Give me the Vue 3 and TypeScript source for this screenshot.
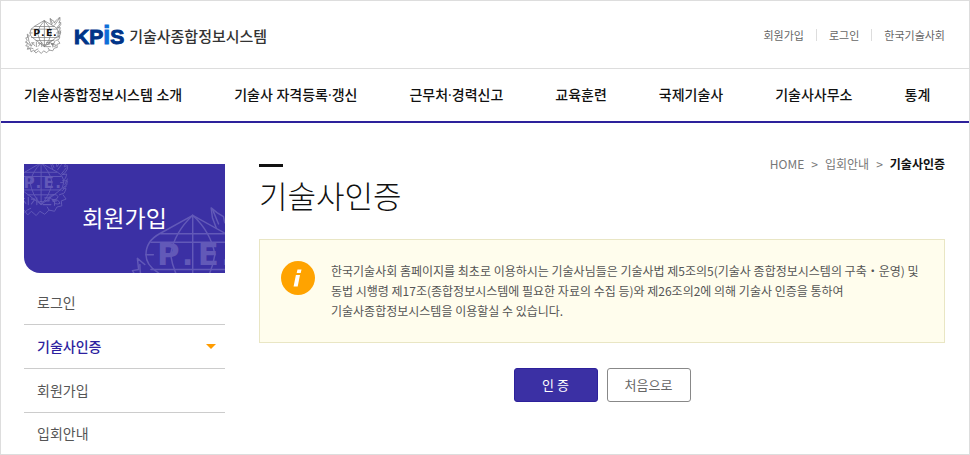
<script setup lang="ts">
interface LinkItem {
  label: string
  href: string
}

interface SideItem extends LinkItem {
  active?: boolean
}

const utilityLinks: LinkItem[] = [
  { label: '회원가입', href: '#join' },
  { label: '로그인', href: '#login' },
  { label: '한국기술사회', href: '#kpea' },
]

const mainMenu: LinkItem[] = [
  { label: '기술사종합정보시스템 소개', href: '#intro' },
  { label: '기술사 자격등록·갱신', href: '#license' },
  { label: '근무처·경력신고', href: '#career' },
  { label: '교육훈련', href: '#education' },
  { label: '국제기술사', href: '#international' },
  { label: '기술사사무소', href: '#office' },
  { label: '통계', href: '#statistics' },
]

const sideMenu: SideItem[] = [
  { label: '로그인', href: '#login' },
  { label: '기술사인증', href: '#verify', active: true },
  { label: '회원가입', href: '#join' },
  { label: '입회안내', href: '#guide' },
]
</script>

<template>
  <div class="page">
    <svg class="defs" width="0" height="0" aria-hidden="true">
      <symbol id="emblem" viewBox="0 0 100 100">
        <g fill="none" stroke="currentColor" stroke-linejoin="round" stroke-linecap="round">
          <path d="M51 10 L78 25 Q88 31 88 42 Q88 50 80 56 L51 78 L22 56 Q13 50 13 42 Q13 31 24 25 Z" />
          <path d="M51 10 V78 M51 10 Q36 24 33 42 Q36 62 51 78 M51 10 Q66 24 69 42 Q66 62 51 78" />
          <path d="M25 25 H77 M17 32 H84 M13 42 H19 M83 42 H88 M17 54 H84 M29 62 H73" />
          <path d="M70 20 l-3 -8 -1 -8 5 4 5 3 1 5 4 -6 6 -6 5 -3 0 8 -3 7 5 -2 0 6 -4 6 -5 3 8 -1 -2 7 -5 4 8 0 -1 7 -7 5 6 1 -3 7 -8 3" />
          <path d="M72 17 L67 5 M78 21 Q84 13 91 3 M84 28 Q89 22 92 18 M90 45 L94 36 M86 55 L92 48" />
          <path d="M12 50 l-6 -5 1 9 -5 1 4 7 -5 4 6 4 -5 6 7 1 -3 8 8 -2 2 9 7 -5 6 8 6 -6 8 7 6 -7 8 5 7 -7 9 2 4 -7 8 -2 -1 -8 8 -3 -5 -7" />
          <path d="M8 50 Q8 64 16 76 M4 66 Q10 70 14 76 M9 82 Q15 80 21 83 M24 91 Q28 86 34 84 M64 87 L61 82" />
          <path d="M64 66 q9 -9 15 -1 q-5 10 -15 1 M70 70 q9 -2 12 6 q-9 4 -12 -6" />
          <path stroke-width="1.8" d="M17 68 h7 M21 68 l-4 8 M22 71 l4 5 M30 66 v12 M35 69 h6 l-6 8 M44 67 v11 M49 73 h4 M57 67 h7 v5 h-7 M54 78 h13 M70 72 h6 M73 72 v7" />
        </g>
        <text class="emblem-text" x="22 42 55 74" y="50">P.E.</text>
      </symbol>
    </svg>

    <header class="header">
      <a class="logo" href="#home">
        <svg class="logo-emblem" aria-hidden="true"><use href="#emblem" /></svg>
        <span class="logo-mark">KP<span class="logo-i">i</span>S</span>
        <span class="logo-name">기술사종합정보시스템</span>
      </a>
      <ul class="utility">
        <li v-for="link in utilityLinks" :key="link.label">
          <a :href="link.href">{{ link.label }}</a>
        </li>
      </ul>
    </header>

    <nav class="main-nav">
      <a v-for="item in mainMenu" :key="item.label" :href="item.href">{{ item.label }}</a>
    </nav>

    <div class="body">
      <aside class="side">
        <div class="side-head">
          <svg class="mark-small" aria-hidden="true"><use href="#emblem" /></svg>
          <svg class="mark-large" aria-hidden="true"><use href="#emblem" /></svg>
          <h2>회원가입</h2>
        </div>
        <ul class="side-menu">
          <li v-for="item in sideMenu" :key="item.label">
            <a :href="item.href" :class="{ active: item.active }">{{ item.label }}</a>
          </li>
        </ul>
      </aside>

      <main class="content">
        <div class="title-row">
          <h1>기술사인증</h1>
          <nav class="breadcrumb">
            <a href="#home">HOME</a>
            <span>&gt;</span>
            <a href="#guide">입회안내</a>
            <span>&gt;</span>
            <strong>기술사인증</strong>
          </nav>
        </div>

        <section class="notice">
          <svg class="info-icon" viewBox="0 0 34 34" aria-hidden="true">
            <circle cx="17" cy="17" r="17" fill="#ffa300" />
            <path d="M16.5 8.5h4l-.8 3.6h-4z M14.9 14h4.1l-2.3 11.5h-4.1z" fill="#fff" />
          </svg>
          <p>
            한국기술사회 홈페이지를 최초로 이용하시는 기술사님들은 기술사법 제5조의5(기술사 종합정보시스템의 구축・운영) 및
            동법 시행령 제17조(종합정보시스템에 필요한 자료의 수집 등)와 제26조의2에 의해 기술사 인증을 통하여<br />
            기술사종합정보시스템을 이용할실 수 있습니다.
          </p>
        </section>

        <div class="actions">
          <button type="button" class="primary">인 증</button>
          <button type="button">처음으로</button>
        </div>
      </main>
    </div>
  </div>
</template>

<style>
body {
  margin: 0;
  background: #fff;
}
</style>

<style scoped>
.page {
  box-sizing: border-box;
  min-height: 100vh;
  border: 1px solid #ddd;
  font-family: "Noto Sans CJK KR", "Noto Sans", sans-serif;
  font-size: 12px;
  color: #555;
  word-break: keep-all;
}

.defs {
  position: absolute;
}

.emblem-text {
  font-family: "DejaVu Sans", sans-serif;
  font-size: 25px;
  font-weight: 700;
  fill: var(--letter-color, currentColor);
  stroke: none;
}

a {
  color: inherit;
  text-decoration: none;
}

ul {
  margin: 0;
  padding: 0;
  list-style: none;
}

.header {
  display: flex;
  align-items: center;
  justify-content: space-between;
  height: 67px;
  padding: 0 24px;
  border-bottom: 1px solid #ddd;
}

.logo {
  display: flex;
  align-items: center;
  padding-top: 2px;
}

.logo-emblem {
  --letter-color: #111;
  width: 38px;
  height: 38px;
  margin-right: 11px;
  overflow: visible;
  color: #777;
  stroke-width: 1.8;
}

.logo-mark {
  margin-right: 5px;
  font-family: "Liberation Sans", sans-serif;
  font-size: 21px;
  line-height: 24px;
  font-weight: 700;
  color: #003488;
  -webkit-text-stroke: 1px currentColor;
}

.logo-i {
  font-size: 25px;
  color: #0a6fd8;
}

.logo-name {
  font-size: 15px;
  line-height: 24px;
  font-weight: 500;
  color: #333;
}

.utility {
  display: flex;
  font-size: 11px;
  line-height: 12px;
  color: #666;
}

.utility li + li {
  margin-left: 12px;
  padding-left: 12px;
  border-left: 1px solid #ddd;
}

.main-nav {
  display: flex;
  gap: 52px;
  padding: 0 23px;
  border-bottom: 2px solid #2d219b;
  font-family: "Open Sans", "Noto Sans CJK KR", sans-serif;
  font-size: 14px;
  line-height: 52px;
  font-weight: 500;
  color: #111;
  white-space: nowrap;
}

.body {
  display: flex;
  gap: 34px;
  padding: 41px 24px 0 23px;
}

.side {
  flex: 0 0 201px;
}

.side-head {
  position: relative;
  overflow: hidden;
  padding-bottom: 2px;
  border-bottom-left-radius: 16px;
  background: #3b30a4;
  color: #fff;
}

.side-head h2 {
  position: relative;
  margin: 0;
  font-size: 23px;
  line-height: 107px;
  font-weight: 400;
  text-align: center;
}

.mark-small,
.mark-large {
  position: absolute;
  color: #6259b8;
}

.mark-small {
  top: -7px;
  left: -14px;
  width: 61px;
  height: 61px;
  stroke-width: 1.6;
}

.mark-large {
  top: 39px;
  left: 106px;
  width: 123px;
  height: 123px;
  stroke-width: 1.2;
}

.side-menu {
  padding-top: 8px;
}

.side-menu a {
  display: flex;
  align-items: center;
  justify-content: space-between;
  padding: 0 9px 0 13px;
  font-size: 14px;
  line-height: 43px;
}

.side-menu li + li {
  border-top: 1px solid #ccc;
}

.side-menu li:last-child a {
  line-height: 40px;
}

.side-menu .active {
  font-weight: 500;
  color: #2d1fa0;
}

.side-menu .active::after {
  content: "";
  border: 5px solid transparent;
  border-top-color: #ff9c00;
  border-bottom: 0;
}

.content {
  flex: 1;
  min-width: 0;
}

.title-row {
  display: flex;
  justify-content: space-between;
  align-items: flex-start;
}

h1 {
  margin: 0;
  font-size: 31px;
  line-height: 56px;
  font-weight: 300;
  color: #111;
}

h1::before {
  content: "";
  display: block;
  width: 24px;
  height: 3px;
  background: #111;
}

.breadcrumb {
  display: flex;
  gap: 7px;
  line-height: 16px;
  margin-top: -8px;
  color: #777;
}

.breadcrumb strong {
  font-weight: 700;
  color: #111;
}

.notice {
  display: flex;
  align-items: flex-start;
  gap: 16px;
  margin-top: 16px;
  padding: 21px;
  border: 1px solid #e9e6c4;
  background: #fffded;
}

.info-icon {
  flex: none;
  width: 34px;
  height: 34px;
}

.notice p {
  margin: 0;
  line-height: 20px;
}

.actions {
  display: flex;
  justify-content: center;
  gap: 9px;
  margin-top: 25px;
}

button {
  width: 84px;
  height: 34px;
  padding: 0 0 2px;
  border: 1px solid #888;
  border-radius: 3px;
  background: #fff;
  font-family: inherit;
  font-size: 13px;
  color: #666;
}

.primary {
  border-color: #2d219b;
  background: #3b30a4;
  color: #fff;
}
</style>
